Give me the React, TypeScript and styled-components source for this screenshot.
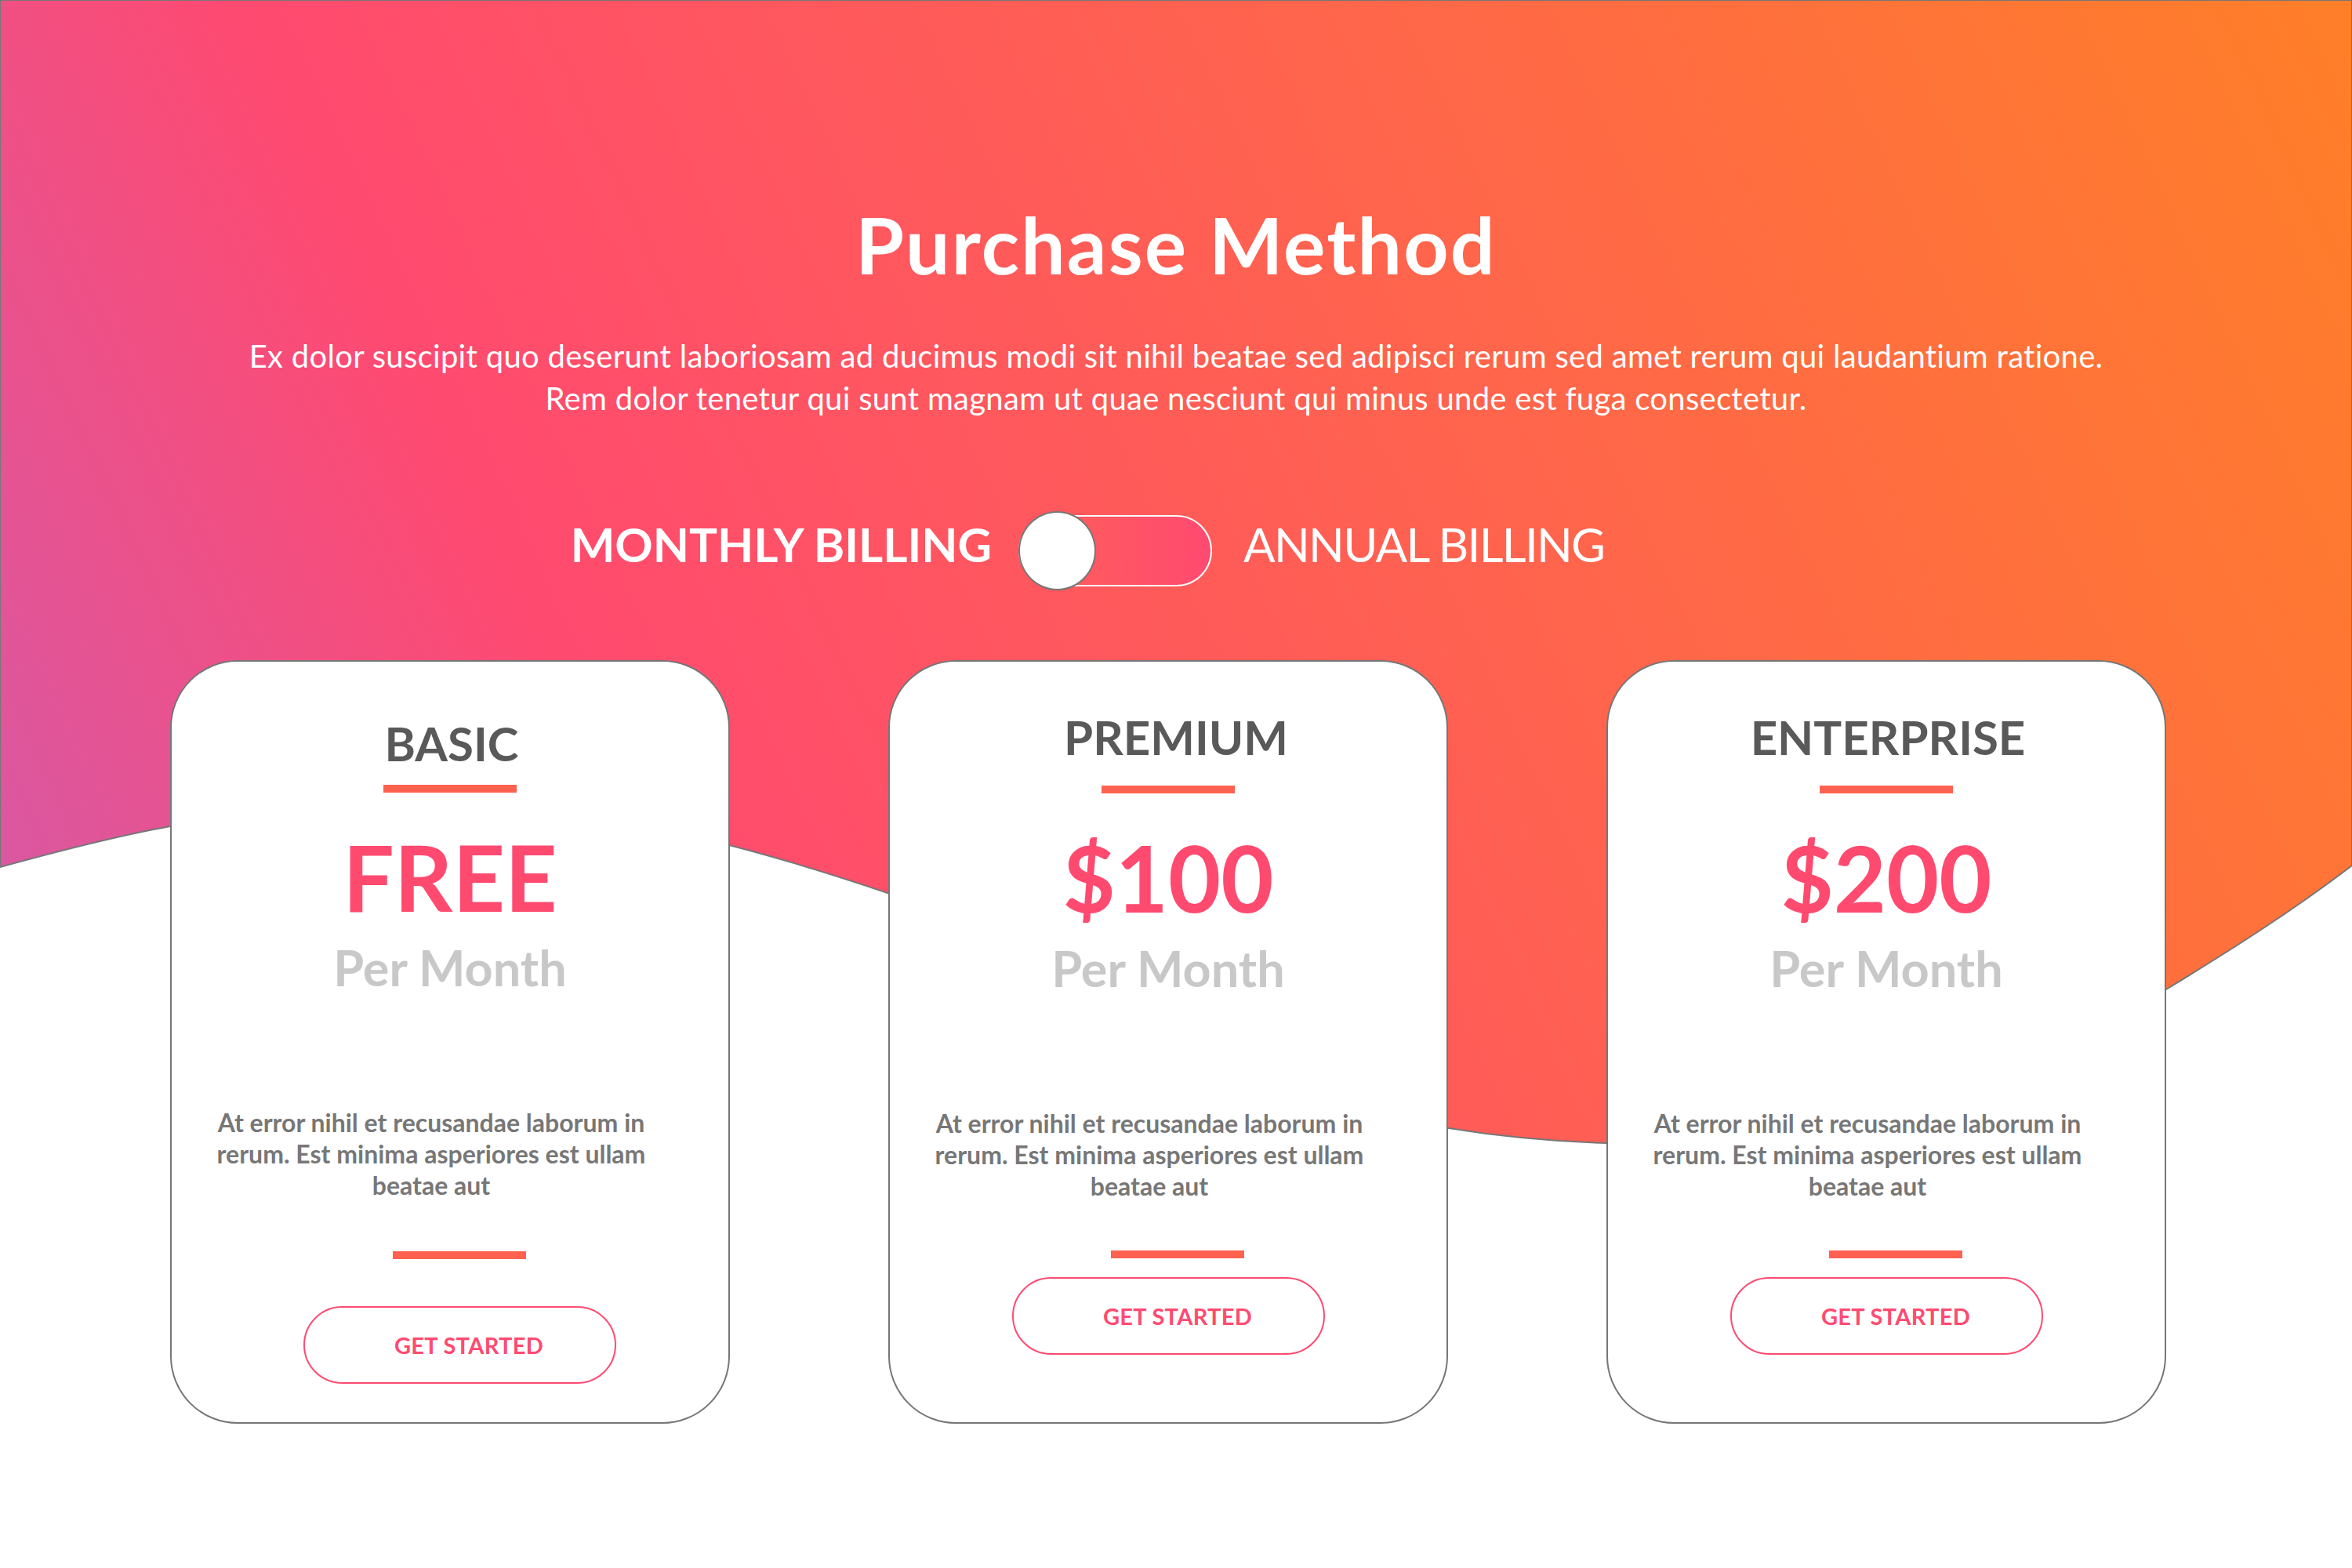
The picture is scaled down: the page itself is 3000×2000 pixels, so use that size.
import React from "react";
import styled, { createGlobalStyle } from "styled-components";

const GlobalStyle = createGlobalStyle`
  html, body { margin: 0; padding: 0; background: #ffffff; }
  * { box-sizing: border-box; }
`;

const FONT = `Lato, "Open Sans", "Liberation Sans", sans-serif`;
const PINK = "#ff4a70";
const CORAL = "#ff6150";

const Page = styled.div`
  position: relative;
  width: 3000px;
  height: 2000px;
  overflow: hidden;
  background: #ffffff;
  font-family: ${FONT};
`;

const Backdrop = styled.svg`
  position: absolute;
  top: 0;
  left: 0;
  width: 3000px;
  height: 1500px;
  z-index: 0;
`;

const Content = styled.main`
  position: relative;
  z-index: 1;
  display: flex;
  flex-direction: column;
  align-items: center;
  padding-top: 251px;
`;

const Title = styled.h1`
  margin: 0;
  font: 700 100px/1.2 ${FONT};
  letter-spacing: 2.2px;
  color: #ffffff;
`;

const Subtitle = styled.p`
  margin: 56px 0 0;
  font: 400 40px/54px ${FONT};
  letter-spacing: 0.3px;
  color: #ffffff;
  text-align: center;
`;

const BillingRow = styled.div`
  display: grid;
  grid-template-columns: 1299px 247px 1fr;
  align-items: center;
  width: 100%;
  margin-top: 117px;
`;

const BillingLabel = styled.span<{ $active?: boolean; $side: "left" | "right" }>`
  font: ${(p) => (p.$active ? 700 : 400)} 60px/1.2 ${FONT};
  letter-spacing: ${(p) => (p.$active ? "0" : "-1.7px")};
  color: #ffffff;
  text-align: ${(p) => (p.$side === "left" ? "right" : "left")};
  padding: ${(p) => (p.$side === "left" ? "0 34px 18px 0" : "0 0 18px 40px")};
  white-space: nowrap;
`;

const Switch = styled.div`
  position: relative;
  width: 247px;
  height: 101px;
  display: flex;
  align-items: center;
`;

const Track = styled.div`
  width: 100%;
  height: 91px;
  border: 2px solid #ffffff;
  border-radius: 46px;
  background: linear-gradient(90deg, #ff6058 0%, #ff4a70 100%);
`;

const Knob = styled.div`
  position: absolute;
  left: 0;
  top: 0;
  width: 99px;
  height: 101px;
  border-radius: 50%;
  background: #ffffff;
  border: 2px solid #777777;
`;

const CardRow = styled.div`
  display: grid;
  grid-template-columns: repeat(3, 714px);
  column-gap: 202px;
  align-self: flex-start;
  margin-left: 217px;
  margin-top: 89px;
`;

const Card = styled.section<{ $top: number }>`
  height: 974px;
  border: 2px solid #767676;
  border-radius: 86px;
  background: #ffffff;
  display: flex;
  flex-direction: column;
  align-items: center;
  padding-top: ${(p) => p.$top}px;
`;

const PlanName = styled.h2<{ $shift: number }>`
  margin: 0 0 0 ${(p) => p.$shift * 2}px;
  font: 700 60px/1.2 ${FONT};
  color: #595959;
`;

const Rule = styled.div<{ $mt: number; $shift?: number }>`
  width: 170px;
  height: 10px;
  background: ${CORAL};
  margin-top: ${(p) => p.$mt}px;
  margin-left: ${(p) => (p.$shift ?? 0) * 2}px;
`;

const Price = styled.div`
  margin-top: 38px;
  font: 700 116px/1.2 ${FONT};
  color: ${PINK};
`;

const Period = styled.div`
  margin-top: 8px;
  font: 700 63px/1.2 ${FONT};
  color: #c8c8c8;
`;

const Description = styled.p`
  margin: 140px 48px 0 0;
  width: 580px;
  font: 700 32px/40px ${FONT};
  color: #777777;
  text-align: center;
`;

const CtaButton = styled.button<{ $mt: number; $shift: number }>`
  margin-top: ${(p) => p.$mt}px;
  margin-left: ${(p) => p.$shift * 2}px;
  width: 399px;
  height: 99px;
  border: 2px solid ${PINK};
  border-radius: 50px;
  background: #ffffff;
  color: ${PINK};
  font: 700 29px/1 ${FONT};
  letter-spacing: 0.3px;
  text-transform: uppercase;
  padding: 0 0 0 24px;
  cursor: pointer;
`;

type Plan = {
  name: string;
  price: string;
  top: number;
  titleShift: number;
  ruleGap: number;
  buttonGap: number;
  buttonShift: number;
};

const plans: Plan[] = [
  { name: "BASIC", price: "FREE", top: 68, titleShift: 2, ruleGap: 17, buttonGap: 60, buttonShift: 12 },
  { name: "PREMIUM", price: "$100", top: 60, titleShift: 10, ruleGap: 26, buttonGap: 24, buttonShift: 0 },
  { name: "ENTERPRISE", price: "$200", top: 60, titleShift: 2, ruleGap: 26, buttonGap: 24, buttonShift: 0 },
];

const wavePath =
  "M0,0 H3000 V1104 C2920,1165 2840,1215 2763,1262 C2600,1360 2300,1466 2049,1458 " +
  "C1985,1456 1915,1450 1848,1439 C1700,1415 1400,1230 1135,1140 C1070,1118 1000,1096 930,1078 " +
  "C700,1020 400,1020 217,1054 C150,1066 80,1084 0,1106 Z";

export default function App() {
  return (
    <Page>
      <GlobalStyle />
      <Backdrop viewBox="0 0 3000 1500" aria-hidden="true">
        <defs>
          <linearGradient id="heroGrad" gradientUnits="userSpaceOnUse" x1="-10" y1="1434" x2="3010" y2="26">
            <stop offset="0" stopColor="#d35aab" />
            <stop offset="0.27" stopColor="#ff4a70" />
            <stop offset="1" stopColor="#ff7f28" />
          </linearGradient>
        </defs>
        <path d={wavePath} fill="url(#heroGrad)" stroke="#777777" strokeWidth="2" />
      </Backdrop>
      <Content>
        <Title>Purchase Method</Title>
        <Subtitle>
          Ex dolor suscipit quo deserunt laboriosam ad ducimus modi sit nihil beatae sed adipisci rerum sed amet rerum qui laudantium ratione.
          <br />
          Rem dolor tenetur qui sunt magnam ut quae nesciunt qui minus unde est fuga consectetur.
        </Subtitle>
        <BillingRow>
          <BillingLabel $active $side="left">MONTHLY BILLING</BillingLabel>
          <Switch>
            <Track />
            <Knob />
          </Switch>
          <BillingLabel $side="right">ANNUAL BILLING</BillingLabel>
        </BillingRow>
        <CardRow>
          {plans.map((p, i) => (
            <Card key={p.name} $top={p.top}>
              <PlanName $shift={p.titleShift}>{p.name}</PlanName>
              <Rule $mt={p.ruleGap} />
              <Price>{p.price}</Price>
              <Period>Per Month</Period>
              <Description>
                At error nihil et recusandae laborum in rerum. Est minima asperiores est ullam beatae aut
              </Description>
              <Rule $mt={i === 0 ? 64 : 62} $shift={12} />
              <CtaButton $mt={p.buttonGap} $shift={p.buttonShift}>Get Started</CtaButton>
            </Card>
          ))}
        </CardRow>
      </Content>
    </Page>
  );
}
